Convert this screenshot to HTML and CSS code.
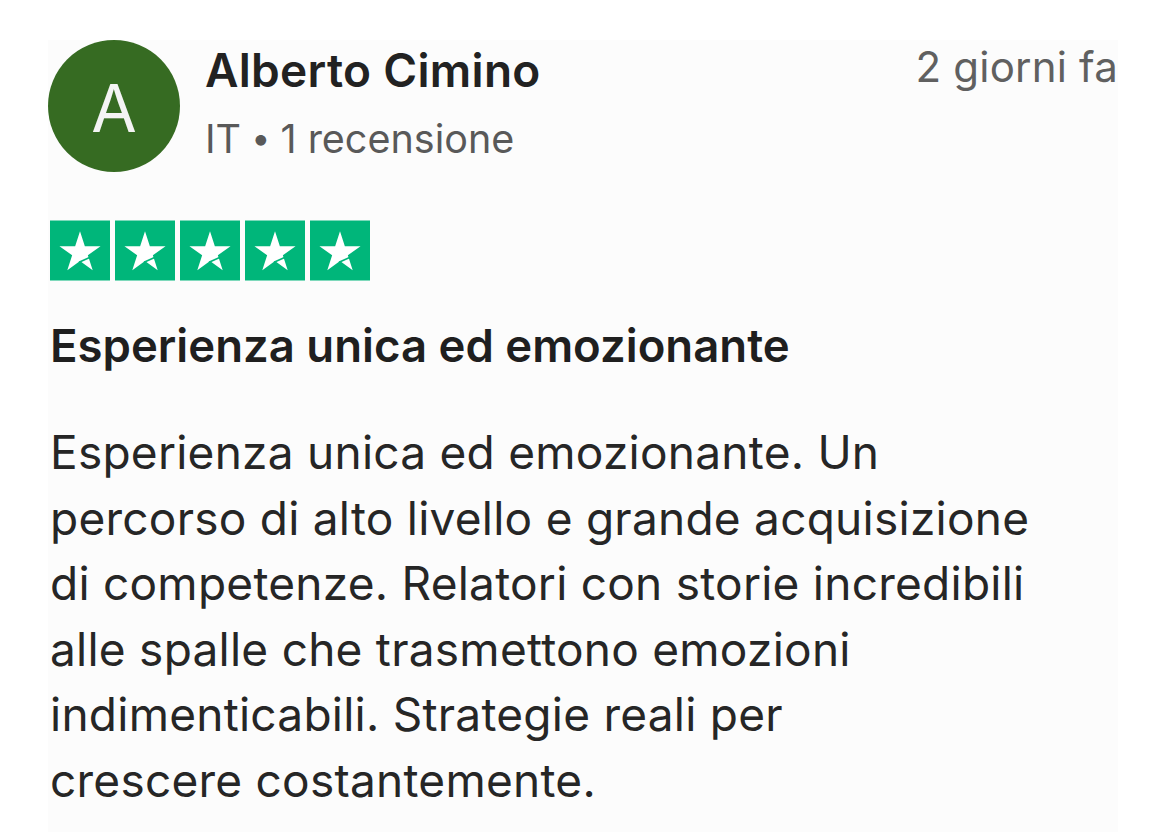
FILE: index.html
```html
<!DOCTYPE html>
<html>
<head>
	<title>Recensione</title>
	<meta charset="utf-8">
	<link rel="stylesheet" href="styles.css">
</head>
<body>
<div class="review">
	<div class="head">
		<div class="avatar">A</div>
		<div class="who">
			<div class="name">Alberto Cimino</div>
			<div class="meta">IT <span class="dot">•</span> 1 recensione</div>
		</div>
		<div class="date">2 giorni fa</div>
	</div>

	<div class="stars">
		<svg class="star" viewBox="0 0 60 60"><rect width="60" height="60" fill="#00b67a"/><polygon fill="#fff" points="30,10.7 34.85,25.63 50.54,25.63 37.85,34.85 42.7,49.77 30,40.55 17.3,49.77 22.15,34.85 9.46,25.63 25.15,25.63"/><line x1="29" y1="41.8" x2="39.6" y2="37" stroke="#00b67a" stroke-width="1.6"/></svg>
		<svg class="star" viewBox="0 0 60 60"><rect width="60" height="60" fill="#00b67a"/><polygon fill="#fff" points="30,10.7 34.85,25.63 50.54,25.63 37.85,34.85 42.7,49.77 30,40.55 17.3,49.77 22.15,34.85 9.46,25.63 25.15,25.63"/><line x1="29" y1="41.8" x2="39.6" y2="37" stroke="#00b67a" stroke-width="1.6"/></svg>
		<svg class="star" viewBox="0 0 60 60"><rect width="60" height="60" fill="#00b67a"/><polygon fill="#fff" points="30,10.7 34.85,25.63 50.54,25.63 37.85,34.85 42.7,49.77 30,40.55 17.3,49.77 22.15,34.85 9.46,25.63 25.15,25.63"/><line x1="29" y1="41.8" x2="39.6" y2="37" stroke="#00b67a" stroke-width="1.6"/></svg>
		<svg class="star" viewBox="0 0 60 60"><rect width="60" height="60" fill="#00b67a"/><polygon fill="#fff" points="30,10.7 34.85,25.63 50.54,25.63 37.85,34.85 42.7,49.77 30,40.55 17.3,49.77 22.15,34.85 9.46,25.63 25.15,25.63"/><line x1="29" y1="41.8" x2="39.6" y2="37" stroke="#00b67a" stroke-width="1.6"/></svg>
		<svg class="star" viewBox="0 0 60 60"><rect width="60" height="60" fill="#00b67a"/><polygon fill="#fff" points="30,10.7 34.85,25.63 50.54,25.63 37.85,34.85 42.7,49.77 30,40.55 17.3,49.77 22.15,34.85 9.46,25.63 25.15,25.63"/><line x1="29" y1="41.8" x2="39.6" y2="37" stroke="#00b67a" stroke-width="1.6"/></svg>
	</div>

	<h2 class="title">Esperienza unica ed emozionante</h2>

	<p class="text">Esperienza unica ed emozionante. Un<br>
	percorso di alto livello e grande acquisizione<br>
	di competenze. Relatori con storie incredibili<br>
	alle spalle che trasmettono emozioni<br>
	indimenticabili. Strategie reali per<br>
	crescere costantemente.</p>
</div>
</body>
</html>
```

FILE: styles.css
```css
*{
	margin: 0;
	padding: 0;
}
body{
	background: #fff;
	font-family: Inter, "Liberation Sans", sans-serif;
	color: #262626;
}
.review{
	margin: 40px 52px 0 48px;
	background: #fcfcfc;
	height: 792px;
}
.head{
	display: flex;
	align-items: flex-start;
}
.avatar{
	width: 132px;
	height: 132px;
	border-radius: 50%;
	background: #366b22;
	color: #f4f4f4;
	font-size: 66px;
	line-height: 136px;
	text-align: center;
	flex-shrink: 0;
	overflow: hidden;
}
.who{
	margin-left: 25px;
	flex: 1;
}
.name{
	font-size: 46px;
	font-weight: 600;
	color: #222;
	line-height: 48px;
	margin-top: 6px;
	letter-spacing: 0.3px;
}
.meta{
	font-size: 39.5px;
	color: #595959;
	line-height: 44px;
	margin-top: 22px;
}
.dot{
	font-size: 34px;
	vertical-align: 3px;
	margin: 0 -1px;
}
.date{
	font-size: 42px;
	color: #606060;
	line-height: 44px;
	margin-top: 5px;
	letter-spacing: 0.2px;
}
.stars{
	display: flex;
	gap: 5px;
	margin: 48px 0 0 2px;
}
.star{
	width: 60px;
	height: 61px;
	display: block;
}
.title{
	font-size: 45.5px;
	font-weight: 600;
	color: #1f1f1f;
	line-height: 50px;
	margin: 40px 0 0 2px;
}
.text{
	font-size: 46px;
	line-height: 65.5px;
	color: #262626;
	margin: 49px 0 0 2px;
	letter-spacing: 0.25px;
}
```
